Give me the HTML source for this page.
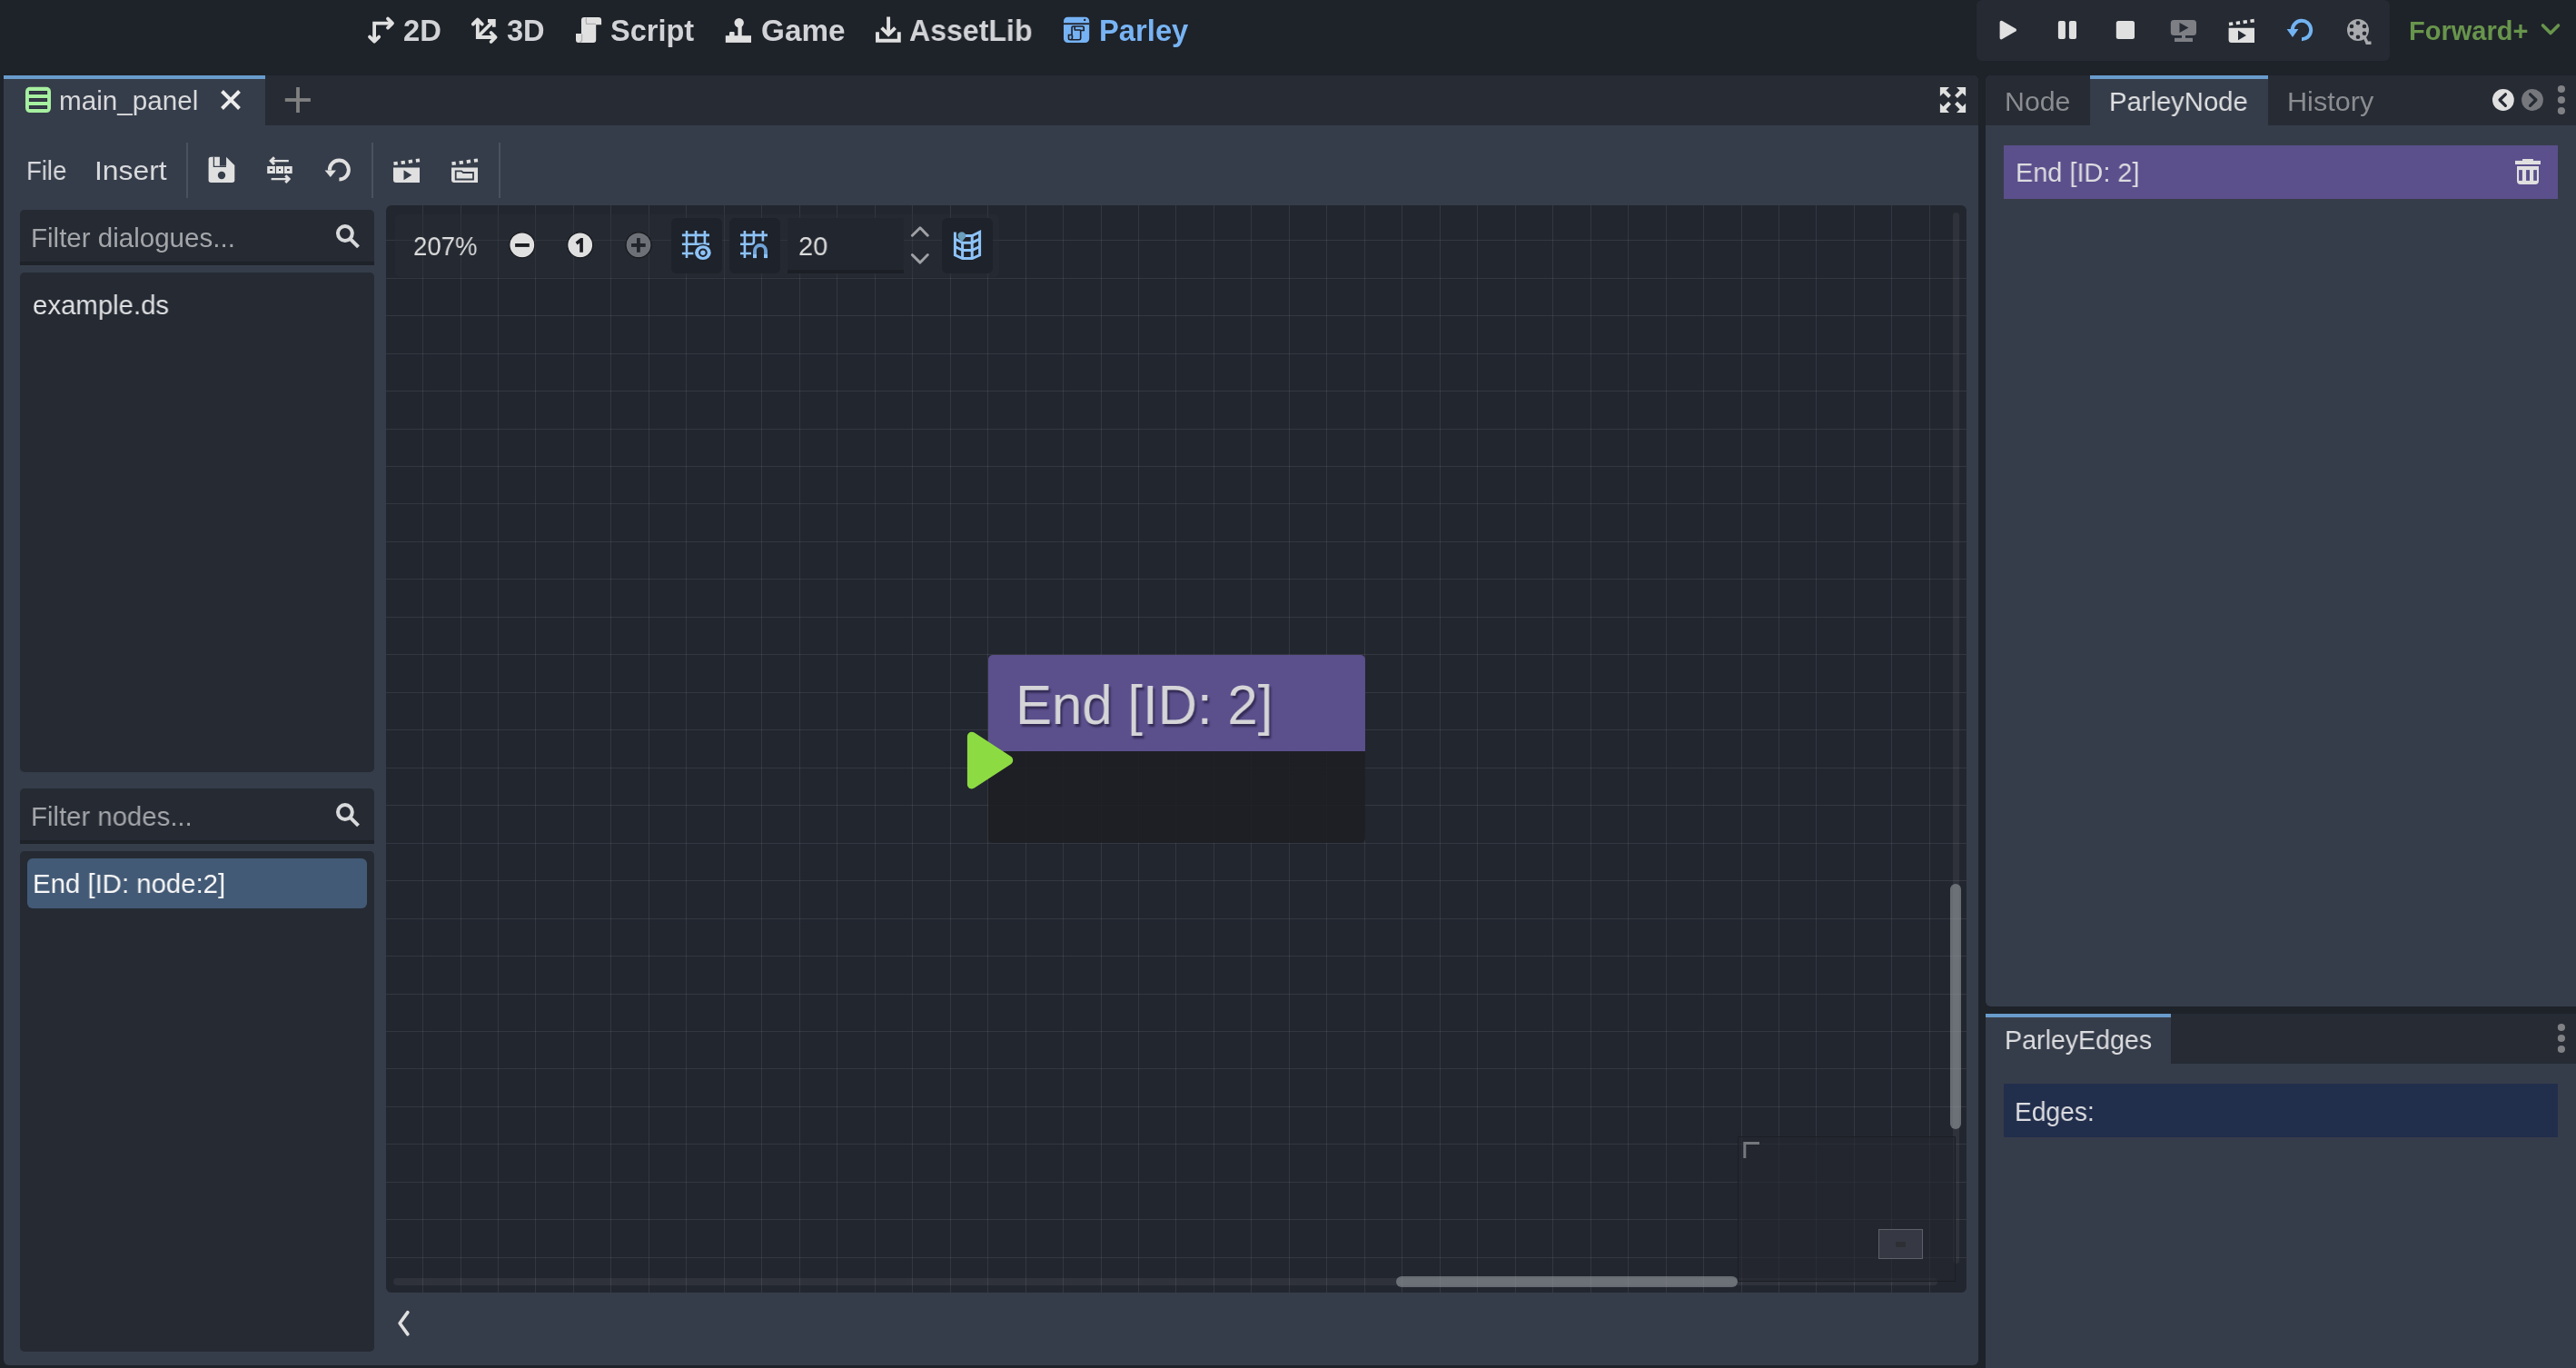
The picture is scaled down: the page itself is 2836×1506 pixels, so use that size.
<!DOCTYPE html>
<html><head><meta charset="utf-8">
<style>
*{margin:0;padding:0;box-sizing:border-box}
html,body{width:2836px;height:1506px;overflow:hidden;background:#1e2229;font-family:"Liberation Sans",sans-serif;color:#dcdde0}
.a{position:absolute}
.t{position:absolute;white-space:pre;line-height:1;transform-origin:0 0;will-change:transform;-webkit-font-smoothing:antialiased}
</style></head><body>
<!-- Run bar -->
<div class="a" style="left:2176px;top:0px;width:455px;height:67px;background:#252a33;border-radius:6px"></div>

<!-- Main panel -->
<div class="a" style="left:4px;top:83px;width:2174px;height:1420px;background:#363d4a;border-radius:6px"></div>
<div class="a" style="left:292px;top:83px;width:1886px;height:55px;background:#262b34;border-top-right-radius:6px"></div>
<div class="a" style="left:4px;top:83px;width:288px;height:4px;background:#699ccc"></div>

<!-- toolbar separators -->
<div class="a" style="left:205px;top:157px;width:2px;height:61px;background:#4b525e"></div>
<div class="a" style="left:409px;top:157px;width:2px;height:61px;background:#4b525e"></div>
<div class="a" style="left:549px;top:157px;width:2px;height:61px;background:#4b525e"></div>

<!-- left lists -->
<div class="a" style="left:22px;top:231px;width:390px;height:61px;background:#252a33;border-radius:5px 5px 0 0"></div>
<div class="a" style="left:22px;top:288px;width:390px;height:4px;background:#1e2229"></div>
<div class="a" style="left:22px;top:300px;width:390px;height:550px;background:#252a33;border-radius:5px"></div>
<div class="a" style="left:22px;top:868px;width:390px;height:61px;background:#252a33;border-radius:5px 5px 0 0"></div>
<div class="a" style="left:22px;top:925px;width:390px;height:4px;background:#1e2229"></div>
<div class="a" style="left:22px;top:937px;width:390px;height:551px;background:#252a33;border-radius:5px"></div>
<div class="a" style="left:30px;top:945px;width:374px;height:55px;background:#435a76;border-radius:6px"></div>

<!-- graph -->
<div class="a" style="left:425px;top:226px;width:1740px;height:1197px;background-color:#22262f;border-radius:6px;overflow:hidden">
<svg width="1740" height="1197" style="position:absolute;left:0;top:0" shape-rendering="crispEdges"><g fill="rgba(255,255,255,0.08)"><rect x="40" y="0" width="1" height="1197"/><rect x="82" y="0" width="1" height="1197"/><rect x="123" y="0" width="1" height="1197"/><rect x="164" y="0" width="1" height="1197"/><rect x="206" y="0" width="1" height="1197"/><rect x="247" y="0" width="1" height="1197"/><rect x="289" y="0" width="1" height="1197"/><rect x="330" y="0" width="1" height="1197"/><rect x="372" y="0" width="1" height="1197"/><rect x="413" y="0" width="1" height="1197"/><rect x="455" y="0" width="1" height="1197"/><rect x="496" y="0" width="1" height="1197"/><rect x="538" y="0" width="1" height="1197"/><rect x="579" y="0" width="1" height="1197"/><rect x="621" y="0" width="1" height="1197"/><rect x="662" y="0" width="1" height="1197"/><rect x="704" y="0" width="1" height="1197"/><rect x="745" y="0" width="1" height="1197"/><rect x="787" y="0" width="1" height="1197"/><rect x="828" y="0" width="1" height="1197"/><rect x="869" y="0" width="1" height="1197"/><rect x="911" y="0" width="1" height="1197"/><rect x="952" y="0" width="1" height="1197"/><rect x="994" y="0" width="1" height="1197"/><rect x="1035" y="0" width="1" height="1197"/><rect x="1077" y="0" width="1" height="1197"/><rect x="1118" y="0" width="1" height="1197"/><rect x="1160" y="0" width="1" height="1197"/><rect x="1201" y="0" width="1" height="1197"/><rect x="1243" y="0" width="1" height="1197"/><rect x="1284" y="0" width="1" height="1197"/><rect x="1326" y="0" width="1" height="1197"/><rect x="1367" y="0" width="1" height="1197"/><rect x="1409" y="0" width="1" height="1197"/><rect x="1450" y="0" width="1" height="1197"/><rect x="1492" y="0" width="1" height="1197"/><rect x="1533" y="0" width="1" height="1197"/><rect x="1574" y="0" width="1" height="1197"/><rect x="1616" y="0" width="1" height="1197"/><rect x="1657" y="0" width="1" height="1197"/><rect x="1699" y="0" width="1" height="1197"/><rect x="0" y="38" width="1740" height="1"/><rect x="0" y="80" width="1740" height="1"/><rect x="0" y="121" width="1740" height="1"/><rect x="0" y="163" width="1740" height="1"/><rect x="0" y="204" width="1740" height="1"/><rect x="0" y="246" width="1740" height="1"/><rect x="0" y="287" width="1740" height="1"/><rect x="0" y="328" width="1740" height="1"/><rect x="0" y="370" width="1740" height="1"/><rect x="0" y="411" width="1740" height="1"/><rect x="0" y="453" width="1740" height="1"/><rect x="0" y="494" width="1740" height="1"/><rect x="0" y="536" width="1740" height="1"/><rect x="0" y="577" width="1740" height="1"/><rect x="0" y="619" width="1740" height="1"/><rect x="0" y="660" width="1740" height="1"/><rect x="0" y="702" width="1740" height="1"/><rect x="0" y="743" width="1740" height="1"/><rect x="0" y="785" width="1740" height="1"/><rect x="0" y="826" width="1740" height="1"/><rect x="0" y="868" width="1740" height="1"/><rect x="0" y="909" width="1740" height="1"/><rect x="0" y="950" width="1740" height="1"/><rect x="0" y="992" width="1740" height="1"/><rect x="0" y="1033" width="1740" height="1"/><rect x="0" y="1075" width="1740" height="1"/><rect x="0" y="1116" width="1740" height="1"/><rect x="0" y="1158" width="1740" height="1"/></g></svg></div>
<!-- graph toolbar panel -->
<div class="a" style="left:435px;top:236px;width:665px;height:69px;background:rgba(44,48,58,0.35);border-radius:5px"></div>
<div class="a" style="left:739px;top:240px;width:56px;height:61px;background:#1e222a;border-radius:6px"></div>
<div class="a" style="left:803px;top:240px;width:56px;height:61px;background:#1e222a;border-radius:6px"></div>
<div class="a" style="left:867px;top:240px;width:128px;height:61px;background:#22262e"></div>
<div class="a" style="left:867px;top:297px;width:128px;height:4px;background:#1c1f25"></div>
<div class="a" style="left:1037px;top:240px;width:56px;height:61px;background:#1e222a;border-radius:6px"></div>

<!-- node -->
<div class="a" style="left:1088px;top:721px;width:415px;height:106px;background:#5b4f8c;border-radius:5px 5px 0 0"></div>
<div class="a" style="left:1088px;top:827px;width:415px;height:101px;background:rgba(30,31,35,0.9);border-radius:0 0 5px 5px"></div>

<!-- scrollbars -->
<div class="a" style="left:2150px;top:234px;width:7px;height:1157px;background:rgba(255,255,255,0.06);border-radius:4px"></div>
<div class="a" style="left:2147px;top:973px;width:12px;height:270px;background:rgba(150,153,160,0.6);border-radius:6px"></div>
<div class="a" style="left:433px;top:1407px;width:1700px;height:8px;background:rgba(255,255,255,0.06);border-radius:4px"></div>
<div class="a" style="left:1537px;top:1405px;width:376px;height:12px;background:rgba(150,153,160,0.6);border-radius:6px"></div>

<!-- minimap -->
<div class="a" style="left:1913px;top:1251px;width:240px;height:160px;background:rgba(36,39,47,0.55);border:1px solid #1b1e23"></div>
<div class="a" style="left:2068px;top:1353px;width:49px;height:33px;background:#363943;border:1px solid #5d6066"></div>
<div class="a" style="left:2087px;top:1367px;width:11px;height:6px;background:#2d2f35"></div>

<!-- Right dock top -->
<div class="a" style="left:2186px;top:83px;width:650px;height:1025px;background:#363d4a;border-radius:6px 0 0 6px"></div>
<div class="a" style="left:2186px;top:83px;width:115px;height:55px;background:#262b34;border-top-left-radius:6px"></div>
<div class="a" style="left:2497px;top:83px;width:339px;height:55px;background:#262b34"></div>
<div class="a" style="left:2301px;top:83px;width:196px;height:4px;background:#699ccc"></div>
<div class="a" style="left:2206px;top:160px;width:610px;height:59px;background:#5b4f8c"></div>

<!-- Right dock bottom -->
<div class="a" style="left:2186px;top:1116px;width:650px;height:390px;background:#363d4a;border-radius:6px 0 0 0"></div>
<div class="a" style="left:2390px;top:1116px;width:446px;height:55px;background:#262b34"></div>
<div class="a" style="left:2186px;top:1116px;width:204px;height:4px;background:#699ccc"></div>
<div class="a" style="left:2206px;top:1193px;width:610px;height:59px;background:#212e4c"></div>


<div class="t" style="left:443.89px;top:18.28px;font-size:32.5px;font-weight:bold;color:#d2d3d7;transform:scaleX(1.0077);">2D</div>
<div class="t" style="left:557.7px;top:18.28px;font-size:32.5px;font-weight:bold;color:#d2d3d7;transform:scaleX(1.0026);">3D</div>
<div class="t" style="left:672.0px;top:18.28px;font-size:32.5px;font-weight:bold;color:#d2d3d7;transform:scaleX(0.9978);">Script</div>
<div class="t" style="left:837.78px;top:18.28px;font-size:32.5px;font-weight:bold;color:#d2d3d7;transform:scaleX(1.0239);">Game</div>
<div class="t" style="left:1001.41px;top:18.48px;font-size:32.5px;font-weight:bold;color:#d2d3d7;transform:scaleX(0.9874);">AssetLib</div>
<div class="t" style="left:1209.79px;top:18.48px;font-size:32.5px;font-weight:bold;color:#78b4f4;transform:scaleX(1.0073);">Parley</div>
<div class="t" style="left:2652.0px;top:20.25px;font-size:29px;font-weight:bold;color:#68954c;transform:scaleX(0.9977);">Forward+</div>
<div class="t" style="left:65.09px;top:96.02px;font-size:29.5px;font-weight:normal;color:#d8d9dc;transform:scaleX(1.0047);">main_panel</div>
<div class="t" style="left:28.84px;top:173.02px;font-size:29.5px;font-weight:normal;color:#d8d9dc;transform:scaleX(0.9311);">File</div>
<div class="t" style="left:103.76px;top:173.02px;font-size:29.5px;font-weight:normal;color:#d8d9dc;transform:scaleX(1.0803);">Insert</div>
<div class="t" style="left:33.8px;top:247.02px;font-size:29.5px;font-weight:normal;color:#a4a6aa;transform:scaleX(1.0009);">Filter dialogues...</div>
<div class="t" style="left:35.7px;top:321.32px;font-size:29.5px;font-weight:normal;color:#dfe0e2;transform:scaleX(0.9953);">example.ds</div>
<div class="t" style="left:33.81px;top:884.12px;font-size:29.5px;font-weight:normal;color:#a4a6aa;transform:scaleX(0.9943);">Filter nodes...</div>
<div class="t" style="left:35.51px;top:958.32px;font-size:29.5px;font-weight:normal;color:#f8f8f8;transform:scaleX(0.9952);">End [ID: node:2]</div>
<div class="t" style="left:455.07px;top:256.12px;font-size:29.5px;font-weight:normal;color:#dcdcdc;transform:scaleX(0.9338);">207%</div>
<div class="t" style="left:878.62px;top:256.02px;font-size:29.5px;font-weight:normal;color:#dcdcdc;transform:scaleX(0.9806);">20</div>
<div class="t" style="left:1118.16px;top:744.5px;font-size:62px;font-weight:normal;color:#d5d5d8;transform:scaleX(0.9673);text-shadow:2px 3px 2px rgba(20,15,40,0.55);">End [ID: 2]</div>
<div class="t" style="left:2206.95px;top:96.52px;font-size:29.5px;font-weight:normal;color:#8a8c90;transform:scaleX(1.0269);">Node</div>
<div class="t" style="left:2322.42px;top:96.52px;font-size:29.5px;font-weight:normal;color:#dedfe1;transform:scaleX(0.9907);">ParleyNode</div>
<div class="t" style="left:2517.92px;top:96.52px;font-size:29.5px;font-weight:normal;color:#8a8c90;transform:scaleX(1.0378);">History</div>
<div class="t" style="left:2218.64px;top:174.72px;font-size:29.5px;font-weight:normal;color:#dcdce0;transform:scaleX(0.9787);">End [ID: 2]</div>
<div class="t" style="left:2206.86px;top:1130.02px;font-size:29.5px;font-weight:normal;color:#dcdde0;transform:scaleX(0.9695);">ParleyEdges</div>
<div class="t" style="left:2218.49px;top:1208.82px;font-size:29.5px;font-weight:normal;color:#dcdde0;transform:scaleX(0.9545);">Edges:</div>
<svg class="a" style="left:0;top:0" width="2836" height="1506" viewBox="0 0 2836 1506">
<!-- 2D -->
<g fill="none" stroke="#e0e0e0" stroke-width="3.8">
<path d="M412.1,45 V25.6 H431.5"/>
<path d="M427,20.6 L432,25.6 L427,30.6" stroke-linecap="round" stroke-linejoin="round"/>
<path d="M407,40.6 L412.1,45.7 L417.2,40.6" stroke-linecap="round" stroke-linejoin="round"/>
</g>
<!-- 3D -->
<g fill="none" stroke="#e0e0e0" stroke-width="3.8">
<path d="M525.8,22 V41 H545"/>
<path d="M520.8,26.6 L525.8,21.6 L530.8,26.6" stroke-linecap="round" stroke-linejoin="round"/>
<path d="M540.6,36 L545.6,41 L540.6,46" stroke-linecap="round" stroke-linejoin="round"/>
<path d="M527,39.5 L542.5,24"/>
<path d="M537,23 H543.8 V29.8"/>
</g>
<!-- Script -->
<g>
<path d="M640,22 Q640,19 643,19 H659 Q662.1,19 662.1,22 V27.2 H656.2 V44 Q656.2,46.9 653.3,46.9 H637 Q634,46.9 634,44 V37 H640 Z" fill="#e0e0e0"/>
<path d="M645.5,19.6 Q644.6,22 645.6,26.4 H656" stroke="#b0b0b3" stroke-width="1.3" fill="none"/>
<path d="M640.6,37.5 V44 Q640.6,46.3 637.8,46.3" stroke="#b0b0b3" stroke-width="1.3" fill="none"/>
</g>
<!-- Game -->
<g fill="#e0e0e0">
<circle cx="813.7" cy="25.1" r="5.2"/>
<rect x="812.4" y="28" width="4.3" height="12"/>
<rect x="798.8" y="39.2" width="28.2" height="7.7"/>
<rect x="803" y="35" width="5.6" height="5" rx="1.2"/>
</g>
<!-- AssetLib -->
<g fill="none" stroke="#e0e0e0" stroke-width="3.9">
<path d="M966,35.2 V44.8 H989.8 V35.2"/>
<path d="M978.1,18.5 V37"/>
<path d="M970.6,30.6 L978.1,38.1 L985.6,30.6"/>
</g>
<!-- Parley icon -->
<g>
<rect x="1171" y="18.8" width="28.2" height="28.2" rx="4.5" fill="#76b3f5"/>
<rect x="1171" y="25.3" width="28.2" height="1.8" fill="#1e2229"/>
<circle cx="1194.2" cy="21.9" r="1.2" fill="#1e2229"/>
<g transform="translate(1176.5,29.1) scale(0.594,0.527) translate(-634,-19)"><path d="M640,22 Q640,19 643,19 H659 Q662.1,19 662.1,22 V27.2 H656.2 V44 Q656.2,46.9 653.3,46.9 H637 Q634,46.9 634,44 V37 H640 Z M645.5,19.6 Q644.6,22 645.6,26.4 H656 M640.6,37.5 V44 Q640.6,46.3 637.8,46.3" fill="none" stroke="#1e2229" stroke-width="2.8"/></g>
</g>

<!-- Run bar -->
<g fill="#e0e0e0">
<path d="M2203.4,24.5 L2218.2,33 L2203.4,41.5 Z" stroke="#e0e0e0" stroke-width="3.6" stroke-linejoin="round"/>
<rect x="2265.9" y="22.9" width="8" height="20.1" rx="2"/>
<rect x="2277.9" y="22.9" width="8.1" height="20.1" rx="2"/>
<rect x="2329.8" y="22.9" width="20.2" height="20.1" rx="2.5"/>
</g>
<g fill="#7d7f85">
<rect x="2389.8" y="22" width="28.2" height="17" rx="3.5"/>
<rect x="2402" y="38" width="4" height="5"/>
<rect x="2394" y="41.8" width="20" height="4.2"/>
</g>
<path d="M2399.5,25 L2409.5,30.5 L2399.5,36 Z" fill="#252a33"/>
<g>
<path d="M2453.6,30.8 H2482 V47 H2456.6 Q2453.6,47 2453.6,44 Z" fill="#e0e0e0"/>
<path d="M2464,33.6 L2473,38.9 L2464,44.2 Z" fill="#252a33"/>
<path d="M2454,26.6 L2482,22.6" stroke="#e0e0e0" stroke-width="3.6" stroke-dasharray="4.3,3.6"/>
</g>
<g>
<path d="M2534,43.2 A10.2,10.2 0 1 0 2523.8,33.5" fill="none" stroke="#73b3f1" stroke-width="4"/>
<path d="M2517.6,32 L2530.4,32 L2524,41 Z" fill="#73b3f1"/>
</g>
<g>
<path d="M2602.5,40 Q2605.5,45.5 2606,47.3 H2610.5" fill="none" stroke="#a9aaad" stroke-width="3.4"/>
<circle cx="2596" cy="33" r="12" fill="#a9aaad"/>
<g fill="#252a33">
<circle cx="2596" cy="25.3" r="2.3"/><circle cx="2589" cy="29" r="2.3"/><circle cx="2603" cy="29" r="2.3"/>
<circle cx="2589" cy="36.7" r="2.3"/><circle cx="2603" cy="36.7" r="2.3"/><circle cx="2596" cy="40.8" r="2.3"/>
</g>
</g>
<!-- Forward+ chevron -->
<path d="M2799.5,28 L2808,36.5 L2816.5,28" fill="none" stroke="#68954c" stroke-width="3.6" stroke-linecap="round" stroke-linejoin="round"/>

<!-- Tab icon -->
<g>
<rect x="28" y="95.8" width="28" height="28.3" rx="5" fill="#a6f0a0"/>
<g fill="#363d4a" stroke="#2a2c3c" stroke-width="1">
<rect x="32.4" y="100.5" width="19.2" height="3"/>
<rect x="32.4" y="108.5" width="19.2" height="3"/>
<rect x="32.4" y="116.5" width="19.2" height="3"/>
</g>
</g>
<path d="M244.5,100.5 L263.5,119.5 M263.5,100.5 L244.5,119.5" stroke="#ececec" stroke-width="4"/>
<g fill="#808080"><rect x="326.1" y="96" width="3.8" height="28"/><rect x="313.8" y="108.1" width="28.1" height="3.8"/></g>

<!-- Fullscreen -->
<g fill="#e0e0e0" stroke="#e0e0e0">
<path d="M2135.9,95.9 H2146 L2135.9,106 Z" stroke="none"/>
<path d="M2164.1,95.9 H2154 L2164.1,106 Z" stroke="none"/>
<path d="M2135.9,123.9 H2146 L2135.9,113.8 Z" stroke="none"/>
<path d="M2164.1,123.9 H2154 L2164.1,113.8 Z" stroke="none"/>
<path d="M2139,99 L2146.5,106.5 M2161,99 L2153.5,106.5 M2139,120.8 L2146.5,113.3 M2161,120.8 L2153.5,113.3" stroke-width="4.2" fill="none"/>
</g>

<!-- toolbar: save -->
<g>
<path d="M229.6,175.5 Q229.6,172.8 232.3,172.8 H249 L258.3,182 V198.3 Q258.3,201 255.6,201 H232.3 Q229.6,201 229.6,198.3 Z" fill="#e0e0e0"/>
<rect x="241.9" y="172" width="7.2" height="10.6" fill="#363d4a"/>
<path d="M235.4,172.8 V183.3 H249" fill="none" stroke="#363d4a" stroke-width="1.3"/>
<circle cx="244" cy="193" r="4.2" fill="#363d4a"/>
</g>
<!-- toolbar: shift -->
<g fill="none" stroke="#e0e0e0">
<path d="M317.8,177.1 H300" stroke-width="2.3"/>
<path d="M302,173.2 L298.2,177.1 L302,181" stroke-width="3"/>
<path d="M298.6,197.1 H316" stroke-width="2.3"/>
<path d="M314.3,193.2 L318.1,197.1 L314.3,201" stroke-width="3"/>
<rect x="295.7" y="184.5" width="5.7" height="5" stroke-width="3"/>
<rect x="305.5" y="184.5" width="5" height="5" stroke-width="3"/>
<rect x="314.5" y="184.5" width="5.7" height="5" stroke-width="3"/>
</g>
<!-- toolbar: reload -->
<g>
<path d="M373.4,197.5 A10.5,10.5 0 1 0 362.9,187.5" fill="none" stroke="#e0e0e0" stroke-width="4"/>
<path d="M357.6,187.6 L370,187.6 L363.8,195 Z" fill="#e0e0e0"/>
</g>
<!-- toolbar: clapper play -->
<g>
<path d="M433,184.6 H462 V201 H436 Q433,201 433,198 Z" fill="#e0e0e0"/>
<path d="M444.5,187.3 L453.3,192.8 L444.5,198.3 Z" fill="#363d4a"/>
<path d="M433.5,180.2 L462,176.4" stroke="#e0e0e0" stroke-width="3.8" stroke-dasharray="4.3,3.9"/>
</g>
<!-- toolbar: clapper folder -->
<g>
<path d="M497,184.6 H526 V201 H500 Q497,201 497,198 Z" fill="#e0e0e0"/>
<path d="M501.7,188.4 H508 L510,190 H521 V197.5 H501.7 Z" fill="none" stroke="#363d4a" stroke-width="1.8"/>
<path d="M497.5,180.2 L526,176.4" stroke="#e0e0e0" stroke-width="3.8" stroke-dasharray="4.3,3.9"/>
</g>

<!-- search icons -->
<g fill="none" stroke="#d8d9db" stroke-width="4">
<circle cx="379.9" cy="257" r="7.9"/><path d="M385.5,262.8 L394.5,271.8"/>
<circle cx="379.9" cy="894" r="7.9"/><path d="M385.5,899.8 L394.5,908.8"/>
</g>

<!-- graph toolbar icons -->
<g>
<circle cx="574.8" cy="269.8" r="14" fill="#e0e0e0" stroke="#15171b" stroke-width="1.2"/>
<rect x="567.1" y="268" width="15.7" height="3.9" fill="#1c1d22"/>
<circle cx="638.7" cy="269.8" r="14" fill="#e0e0e0" stroke="#15171b" stroke-width="1.2"/>
<path d="M633.6,266.6 L639.3,262.1 H641.9 V277.8 H638.2 V267.6 L635.6,269.6 Z" fill="#1c1d22"/>
<circle cx="703" cy="269.8" r="14" fill="#6e7077" stroke="#15171b" stroke-width="1.2"/>
<rect x="695" y="268" width="15.7" height="3.9" fill="#22252c"/>
<rect x="701" y="262" width="3.8" height="15.8" fill="#22252c"/>
</g>
<!-- grid eye -->
<g stroke="#8dc3f8" stroke-width="2.6" fill="none">
<path d="M756,253.9 V284.1 M766,253.9 V270 M775.9,253.9 V270 M750.9,258.9 H781 M750.9,268.8 H781 M750.9,279 H763.5"/>
</g>
<ellipse cx="773.9" cy="278.2" rx="10.3" ry="9.4" fill="#1e222a"/>
<ellipse cx="773.9" cy="278.2" rx="8.8" ry="7.9" fill="#8dc3f8"/>
<circle cx="773.9" cy="278.2" r="4.8" fill="#1e222a"/>
<circle cx="773.9" cy="278.2" r="2.7" fill="#8dc3f8"/>
<!-- grid snap -->
<g stroke="#8dc3f8" stroke-width="2.6" fill="none">
<path d="M819.9,253.9 V284.1 M829.9,253.9 V266 Q829.9,268.8 827,268.8 M839.9,253.9 V265.5 M815,258.9 H845 M815,268.8 H828 M815,279 H827"/>
</g>
<path d="M831,284 V276 A6,6 0 0 1 843,276 V284" fill="none" stroke="#6fa3d8" stroke-width="3.9"/>
<rect x="829" y="280" width="4" height="4.1" fill="#8dc3f8"/><rect x="841" y="280" width="4" height="4.1" fill="#8dc3f8"/>
<!-- spin arrows -->
<g fill="none" stroke="#a0a1a6" stroke-width="2.9" stroke-linecap="round" stroke-linejoin="round">
<path d="M1004.4,259.3 L1013,250.7 L1021.3,259.3"/>
<path d="M1004.4,280.6 L1013,289.1 L1021.3,280.6"/>
</g>
<!-- minimap icon -->
<g fill="none" stroke="#8dc3f8" stroke-width="3">
<path d="M1051.4,255.5 V280.8 L1059.6,284.6 H1070.4 L1078.6,280.8 V255.5 L1070.2,259.6 H1063"/>
<path d="M1051.4,263 L1059.6,267.2 H1070.2 L1078.6,263 M1051.4,271.5 L1059.6,275.6 H1070.2 L1078.6,271.5 M1059.6,267 V284 M1070.2,259.6 V284"/>
</g>
<path d="M1058.8,266.6 L1054.8,261.5 A4.4,4.4 0 1 1 1062.8,261.5 Z" fill="#6a9fbd"/>

<!-- node port -->
<path d="M1069.9,810.7 L1110.2,837.05 L1069.9,863.4 Z" fill="#8ddb42" stroke="#8ddb42" stroke-width="10" stroke-linejoin="round"/>

<!-- minimap marker -->
<path d="M1920.8,1275 V1258.6 H1937" fill="none" stroke="#74777c" stroke-width="3"/>

<!-- bottom chevron -->
<path d="M448.9,1444.6 L440.1,1456.8 L448.9,1468.9" fill="none" stroke="#e0e0e0" stroke-width="3.6" stroke-linecap="round" stroke-linejoin="round"/>

<!-- right dock nav -->
<circle cx="2755.9" cy="110" r="11.9" fill="#e0e0e0"/>
<path d="M2758.4,103.8 L2752,110 L2758.4,116.3" fill="none" stroke="#252a33" stroke-width="3.2" stroke-linecap="round" stroke-linejoin="round"/>
<circle cx="2788" cy="110" r="11.9" fill="#76777d"/>
<path d="M2785.5,103.8 L2791.9,110 L2785.5,116.3" fill="none" stroke="#252a33" stroke-width="3.2" stroke-linecap="round" stroke-linejoin="round"/>
<g fill="#808185">
<circle cx="2819.9" cy="98" r="4.1"/><circle cx="2819.9" cy="110" r="4.1"/><circle cx="2819.9" cy="122" r="4.1"/>
<circle cx="2819.9" cy="1131" r="4.1"/><circle cx="2819.9" cy="1143" r="4.1"/><circle cx="2819.9" cy="1155" r="4.1"/>
</g>
<!-- trash -->
<g fill="#e0e0e0">
<rect x="2769" y="176.9" width="28" height="4.1"/>
<rect x="2777.1" y="175" width="11.8" height="3"/>
<path d="M2771,183.1 H2795 V198.9 Q2795,202.9 2791,202.9 H2775 Q2771,202.9 2771,198.9 Z"/>
</g>
<g fill="#5b4f8c">
<rect x="2773.1" y="187.1" width="3.8" height="11.8"/><rect x="2781.1" y="187.1" width="3.9" height="11.8"/><rect x="2789.2" y="187.1" width="3.7" height="11.8"/>
</g>

</svg>
</body></html>
